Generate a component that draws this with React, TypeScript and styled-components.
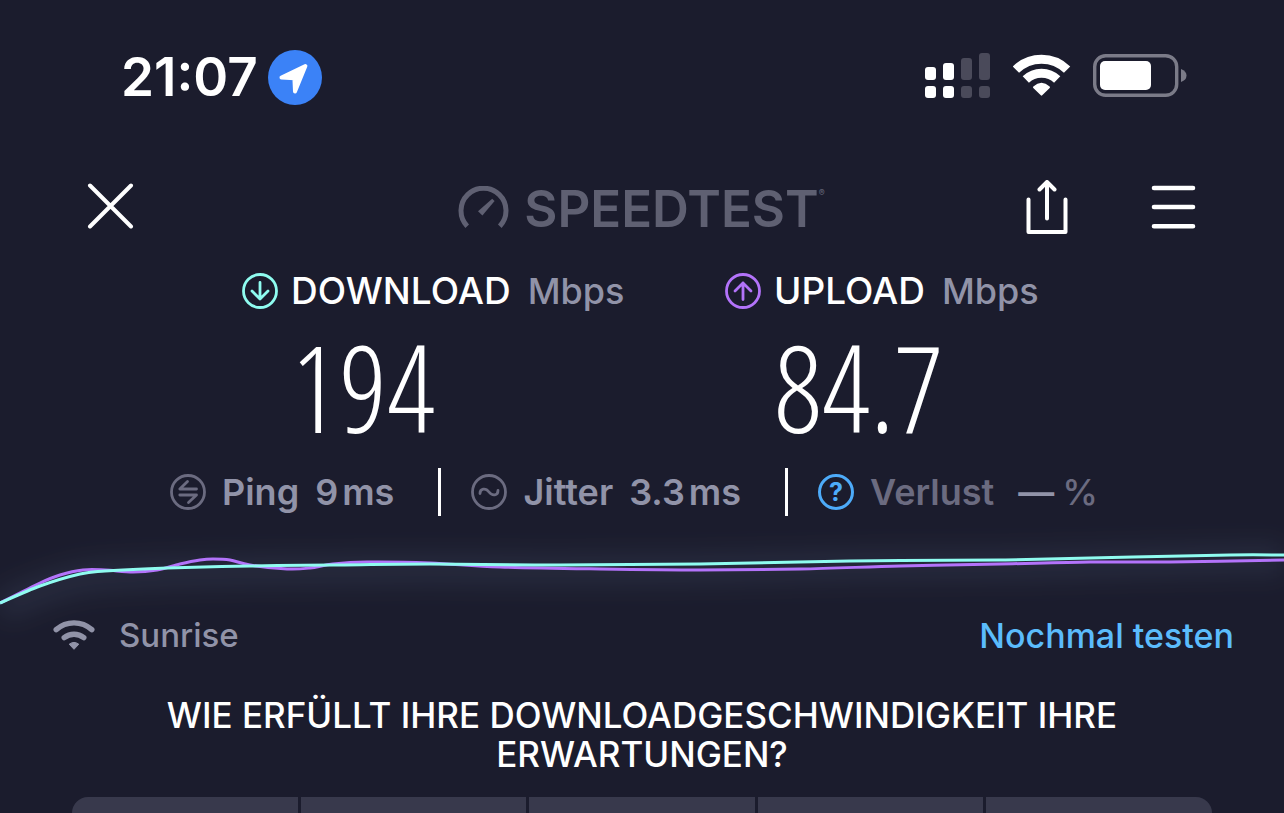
import React from "react";
import styled, { createGlobalStyle } from "styled-components";

const color = {
  background: "#1b1c2d",
  panel: "#38394c",
  white: "#ffffff",
  muted: "#9193a8",
  dim: "#6b6b80",
  logo: "#5f6072",
  download: "#8ffcf0",
  upload: "#b373fa",
  info: "#4dabf9",
  link: "#5bbcfc",
};

const GlobalStyle = createGlobalStyle`
  *, *::before, *::after { box-sizing: border-box; }
  body {
    margin: 0;
    background: ${color.background};
    color: ${color.white};
    font-family: Inter, "Liberation Sans", sans-serif;
  }
`;

const Screen = styled.div`
  display: flex;
  flex-direction: column;
  height: 100vh;
  overflow: hidden;
  padding-top: 48px;
  svg { display: block; flex: none; }
`;

const StatusBar = styled.header`
  display: flex;
  justify-content: space-between;
  align-items: center;
  height: 58px;
  padding: 0 97px 0 121px;
  flex: none;
`;

const Clock = styled.time`
  font-size: 53px;
  line-height: 56px;
  font-weight: 600;
`;

const StatusGroup = styled.div`
  display: flex;
  align-items: center;
  gap: 10px;
`;

const StatusIcons = styled(StatusGroup)`
  gap: 22px;
  padding-bottom: 4px;
`;

const NavBar = styled.nav`
  display: grid;
  grid-template-columns: 1fr auto 1fr;
  align-items: center;
  height: 58px;
  margin-top: 73px;
  padding: 0 88px 0 87px;
  flex: none;
`;

const NavActions = styled.div`
  display: flex;
  justify-content: flex-end;
  gap: 82px;
`;

const IconButton = styled.button`
  display: block;
  width: max-content;
  padding: 0;
  border: 0;
  background: none;
  color: inherit;
  cursor: pointer;
`;

const Brand = styled.div`
  display: flex;
  align-items: center;
  gap: 15px;
  color: ${color.logo};
`;

const BrandName = styled.span`
  display: flex;
  padding-top: 2px;
  font-size: 51px;
  line-height: 56px;
  font-weight: 600;
  sup { font-size: 9px; line-height: 24px; }
`;

const Results = styled.section`
  display: grid;
  grid-template-columns: 1fr 1fr;
  margin-top: 34px;
  padding: 0 76px 0 242px;
  flex: none;
`;

const ResultHead = styled.h2`
  display: flex;
  align-items: center;
  gap: 13px;
  margin: 0;
  font-size: 37px;
  line-height: 40px;
  font-weight: 500;
  white-space: nowrap;
`;

const Unit = styled.span`
  margin-left: 4px;
  font-size: 36px;
  color: ${color.muted};
`;

const ResultValue = styled.p`
  margin: 21px 0 0;
  padding-left: 49px;
  font-family: "Noto Sans ExtraCondensed Thin", "Noto Sans ExtraCondensed", "Roboto Condensed Thin", "Open Sans Condensed Light", Roboto, sans-serif;
  font-size: 120px;
  line-height: 110px;
  font-weight: 100;
`;

const Stats = styled.section`
  display: flex;
  align-items: center;
  justify-content: center;
  margin-top: 26px;
  padding-right: 16px;
  height: 48px;
  font-size: 36px;
  font-weight: 600;
  color: ${color.muted};
  white-space: nowrap;
  flex: none;
`;

const Stat = styled.div<{ $dim?: boolean }>`
  display: flex;
  align-items: center;
  gap: 16px;
  height: 48px;
  color: ${(p) => (p.$dim ? color.dim : color.muted)};
  & + & {
    margin-left: 44px;
    padding-left: 30px;
    border-left: 3px solid ${color.white};
  }
`;

const StatValue = styled.span`
  display: flex;
  gap: 4px;
`;

const Dash = styled.span`
  padding: 0 4px 0 8px;
  color: ${color.muted};
`;

const Percent = styled.span`
  font-weight: 500;
`;

const HelpBadge = styled.button`
  display: grid;
  place-items: center;
  width: 36px;
  height: 36px;
  padding: 0;
  border: 3px solid ${color.info};
  border-radius: 50%;
  background: none;
  color: ${color.info};
  font: 700 25px/28px Inter, sans-serif;
`;

const Graph = styled.svg`
  width: 100%;
  height: 96px;
  margin-top: 4px;
  overflow: visible;
`;

const NetworkRow = styled.section`
  display: flex;
  align-items: center;
  justify-content: space-between;
  height: 38px;
  padding: 0 50px 0 53px;
  font-size: 33px;
  font-weight: 500;
  flex: none;
`;

const Network = styled.div`
  display: flex;
  align-items: center;
  gap: 24px;
  color: ${color.muted};
`;

const RetestLink = styled.a`
  color: ${color.link};
  font-size: 34px;
  text-decoration: none;
`;

const Question = styled.h1`
  margin: 42px 0 0;
  padding: 0 120px;
  font-size: 35px;
  line-height: 39px;
  font-weight: 500;
  text-align: center;
`;

const Rating = styled.div`
  display: grid;
  grid-template-columns: repeat(5, 1fr);
  gap: 3px;
  height: 120px;
  margin: 23px 72px 0;
  border-radius: 16px;
  overflow: hidden;
  flex: none;
`;

const RatingButton = styled.button`
  border: 0;
  background: ${color.panel};
`;

type Point = [number, number];

const uploadPoints: Point[] = [
  [0, 603], [40, 583], [60, 575], [83, 570], [105, 570], [133, 572], [157, 570],
  [180, 564], [200, 560], [213, 559], [230, 560], [250, 565], [287, 569],
  [310, 568], [333, 564], [367, 562], [430, 563], [500, 567], [600, 569],
  [700, 570], [800, 569], [900, 566], [1000, 564], [1090, 562], [1170, 562], [1284, 560],
];

const downloadPoints: Point[] = [
  [0, 603], [40, 586], [80, 574], [105, 571], [167, 568], [250, 566],
  [333, 565], [430, 564], [560, 565], [700, 564], [850, 561], [1000, 560],
  [1133, 557], [1230, 555], [1284, 555],
];

function smoothPath(points: Point[]) {
  let d = `M${points[0][0]} ${points[0][1]}`;
  for (let i = 0; i < points.length - 1; i++) {
    const before = points[Math.max(i - 1, 0)];
    const from = points[i];
    const to = points[i + 1];
    const after = points[Math.min(i + 2, points.length - 1)];
    d += `C${from[0] + (to[0] - before[0]) / 6} ${from[1] + (to[1] - before[1]) / 6} ${
      to[0] - (after[0] - from[0]) / 6
    } ${to[1] - (after[1] - from[1]) / 6} ${to[0]} ${to[1]}`;
  }
  return d;
}

const LocationIcon = () => (
  <svg width="54" height="55" viewBox="0 0 54 55" aria-hidden="true">
    <ellipse cx="27" cy="27.5" rx="27" ry="27.5" fill="#3b82f7" />
    <path d="M37.4 16 13.5 27.6 26.4 28.2 27 41.4Z" fill="#fff" stroke="#fff" strokeWidth="4" strokeLinejoin="round" />
  </svg>
);

const SignalIcon = () => (
  <svg width="66" height="45" viewBox="0 0 66 45" aria-hidden="true">
    {[14, 10, 5, 0].map((top, i) => (
      <g key={top} fill={i < 2 ? "#fff" : "#4a4a5a"}>
        <rect x={i * 18} y={top} width="11" height={27 - top} rx="3" />
        <rect x={i * 18} y="33" width="11" height="12" rx="3" />
      </g>
    ))}
  </svg>
);

const StatusWifiIcon = () => (
  <svg width="58" height="43" viewBox="0 0 58 43" aria-hidden="true">
    <g fill="none" stroke="#fff" strokeWidth="9">
      <path d="M2.9 15.6A36.6 36.6 0 0 1 54.1 15.6" />
      <path d="M12.8 25.6A22.6 22.6 0 0 1 44.2 25.6" />
    </g>
    <path d="M21 33.2Q28.5 26.4 36 33.2L28.5 40.6Z" fill="#fff" stroke="#fff" strokeWidth="2" strokeLinejoin="round" />
  </svg>
);

const BatteryIcon = () => (
  <svg width="94" height="43" viewBox="0 0 94 43" aria-hidden="true">
    <rect x="1.7" y="1.7" width="82" height="39.6" rx="11" fill="none" stroke="#7b7b88" strokeWidth="3.4" />
    <rect x="7" y="7" width="51" height="29" rx="5" fill="#fff" />
    <path d="M88 15Q93.5 17 93.5 21.5T88 28Z" fill="#7b7b88" />
  </svg>
);

const CloseIcon = () => (
  <svg width="47" height="51" viewBox="0 0 47 51" fill="none" stroke="currentColor" strokeWidth="4" strokeLinecap="round" aria-hidden="true">
    <path d="M3 2.5 44 43.5M44 2.5 3 43.5" />
  </svg>
);

const ShareIcon = () => (
  <svg width="44" height="56" viewBox="0 0 44 56" fill="none" stroke="currentColor" strokeWidth="4" strokeLinecap="round" strokeLinejoin="round" aria-hidden="true">
    <path d="M3.5 19.5V52H40.5V19.5M22 38.5V2M14.5 9.5 22 2 29.5 9.5" />
  </svg>
);

const MenuIcon = () => (
  <svg width="45" height="56" viewBox="0 0 45 56" stroke="currentColor" strokeWidth="4.6" strokeLinecap="round" aria-hidden="true">
    <path d="M3 8H42M3 27H42M3 46.3H42" />
  </svg>
);

const GaugeIcon = () => (
  <svg width="51" height="44" viewBox="0 0 51 44" aria-hidden="true">
    <path d="M9.2 40.2A22.5 22.5 0 1 1 41.8 40.2" fill="none" stroke="currentColor" strokeWidth="5" />
    <path d="M20 25.3 24.4 29.6 36.6 15 34.2 12.7Z" fill="currentColor" />
  </svg>
);

const badges = {
  down: "M18 9.5V26M10 18 18 26 26 18",
  up: "M18 26.5V10M10 18 18 10 26 18",
  ping: "M26.5 15H9.8L17.5 7.5M9.8 21H26.5L18.5 28.5",
  jitter: "M9 19.5C9 14.5 14.5 13.5 18 18S27 21.5 27 16.5",
};

const Badge = ({ kind, stroke }: { kind: keyof typeof badges; stroke: string }) => (
  <svg width="36" height="36" viewBox="0 0 36 36" fill="none" stroke={stroke} strokeWidth="2.8" strokeLinecap="round" strokeLinejoin="round" aria-hidden="true">
    <circle cx="18" cy="18" r="16.5" />
    <path d={badges[kind]} />
  </svg>
);

const NetworkWifiIcon = () => (
  <svg width="42" height="32" viewBox="0 0 42 32" aria-hidden="true">
    <g fill="none" stroke="currentColor" strokeWidth="5.4" strokeLinecap="round">
      <path d="M3.2 10.6A27 27 0 0 1 38.8 10.6" />
      <path d="M11.2 18.6A16 16 0 0 1 30.8 18.6" />
    </g>
    <path d="M16.2 25.2Q21 21.6 25.8 25.2L21 30.3Z" fill="currentColor" stroke="currentColor" strokeLinejoin="round" />
  </svg>
);

const Result = ({ kind, label, value }: { kind: "down" | "up"; label: string; value: string }) => (
  <div>
    <ResultHead>
      <Badge kind={kind} stroke={kind === "down" ? color.download : color.upload} />
      {label}
      <Unit>Mbps</Unit>
    </ResultHead>
    <ResultValue>{value}</ResultValue>
  </div>
);

const SpeedGraph = () => {
  const download = smoothPath(downloadPoints);
  const upload = smoothPath(uploadPoints);
  return (
    <Graph viewBox="0 520 1284 96" preserveAspectRatio="none" role="img" aria-label="Download und Upload">
      <defs>
        <filter id="glow" x="-10%" y="-100%" width="120%" height="300%">
          <feGaussianBlur stdDeviation="12" />
        </filter>
      </defs>
      <path d={download} transform="translate(0 5)" fill="none" stroke="#7f9cc8" strokeOpacity="0.1" strokeWidth="32" filter="url(#glow)" />
      <path d={upload} fill="none" stroke={color.upload} strokeWidth="3" />
      <path d={download} fill="none" stroke={color.download} strokeWidth="3" />
    </Graph>
  );
};

export default function App() {
  return (
    <>
      <GlobalStyle />
      <Screen>
        <StatusBar>
          <StatusGroup>
            <Clock>21:07</Clock>
            <LocationIcon />
          </StatusGroup>
          <StatusIcons>
            <SignalIcon />
            <StatusWifiIcon />
            <BatteryIcon />
          </StatusIcons>
        </StatusBar>

        <NavBar>
          <IconButton aria-label="Schließen"><CloseIcon /></IconButton>
          <Brand>
            <GaugeIcon />
            <BrandName>SPEEDTEST<sup>®</sup></BrandName>
          </Brand>
          <NavActions>
            <IconButton aria-label="Teilen"><ShareIcon /></IconButton>
            <IconButton aria-label="Menü"><MenuIcon /></IconButton>
          </NavActions>
        </NavBar>

        <Results>
          <Result kind="down" label="DOWNLOAD" value="194" />
          <Result kind="up" label="UPLOAD" value="84.7" />
        </Results>

        <Stats>
          <Stat>
            <Badge kind="ping" stroke={color.dim} />
            <span>Ping</span>
            <StatValue><span>9</span><span>ms</span></StatValue>
          </Stat>
          <Stat>
            <Badge kind="jitter" stroke={color.dim} />
            <span>Jitter</span>
            <StatValue><span>3.3</span><span>ms</span></StatValue>
          </Stat>
          <Stat $dim>
            <HelpBadge aria-label="Hilfe zum Paketverlust">?</HelpBadge>
            <span>Verlust</span>
            <StatValue><Dash>—</Dash><Percent>%</Percent></StatValue>
          </Stat>
        </Stats>

        <SpeedGraph />

        <NetworkRow>
          <Network><NetworkWifiIcon />Sunrise</Network>
          <RetestLink href="#test">Nochmal testen</RetestLink>
        </NetworkRow>

        <Question>WIE ERFÜLLT IHRE DOWNLOADGESCHWINDIGKEIT IHRE ERWARTUNGEN?</Question>
        <Rating role="group" aria-label="Bewertung">
          {[1, 2, 3, 4, 5].map((score) => (
            <RatingButton key={score} aria-label={`${score} von 5`} />
          ))}
        </Rating>
      </Screen>
    </>
  );
}
